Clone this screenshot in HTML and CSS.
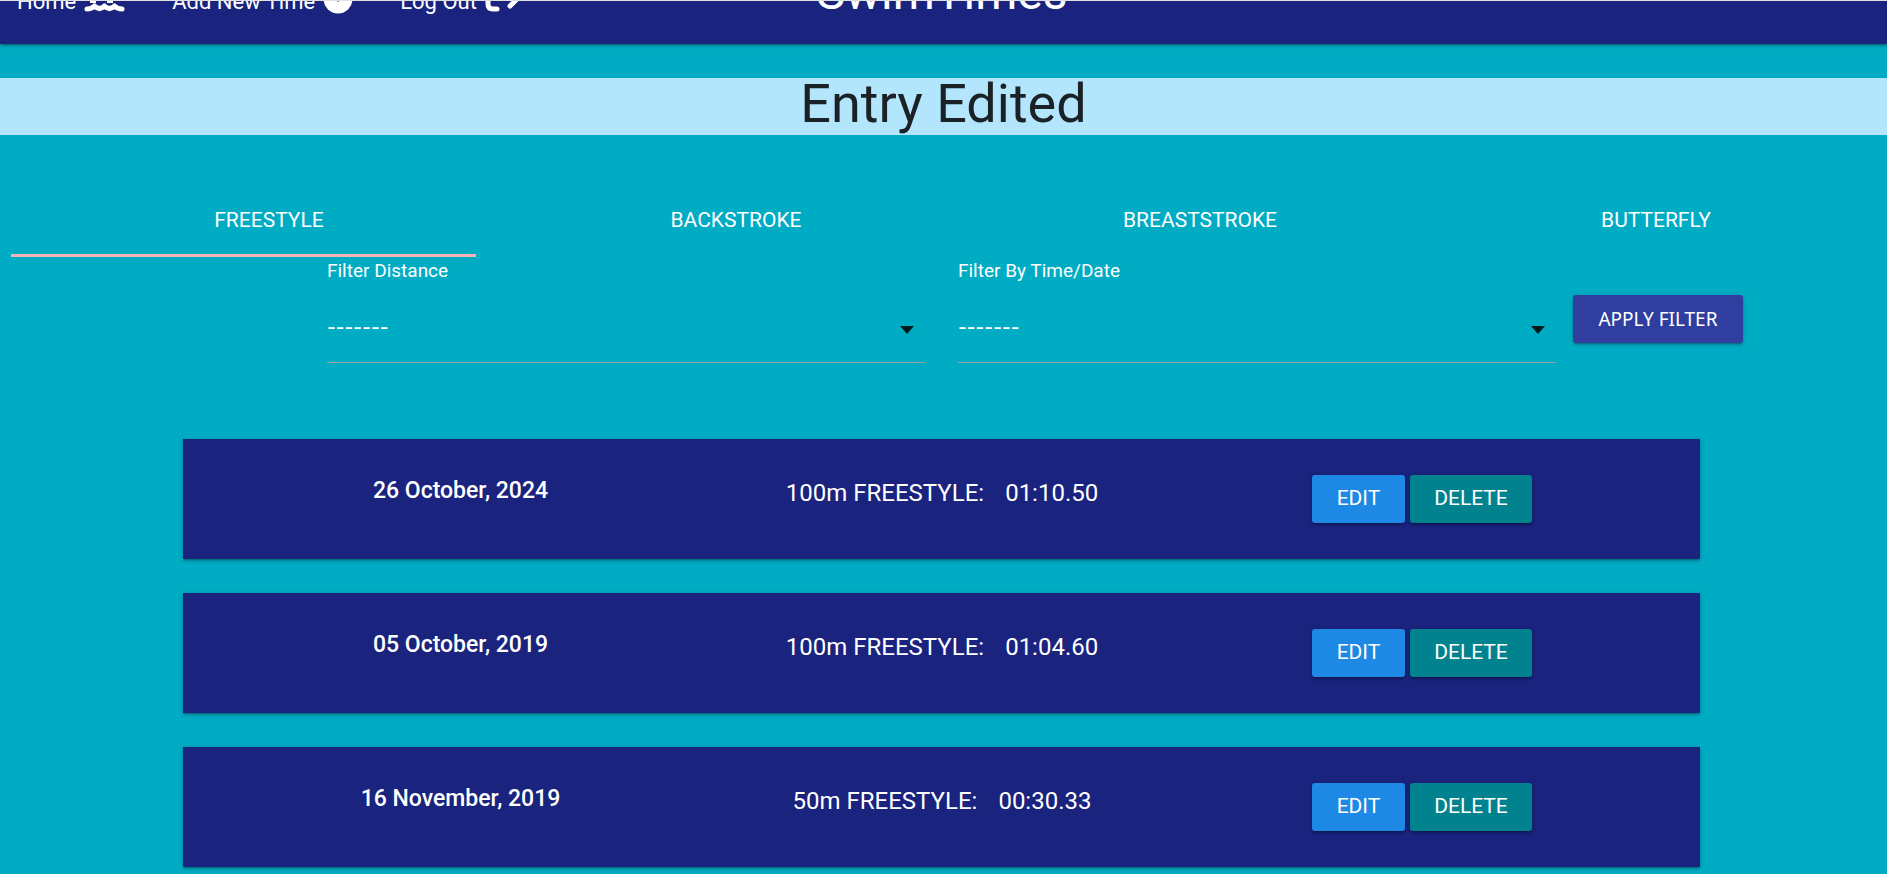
FILE: index.html
```html
<!DOCTYPE html>
<html lang="en">
<head>
<meta charset="utf-8">
<title>SwimTimes</title>
<link rel="stylesheet" href="styles.css">
</head>
<body>
<header class="navbar">
  <nav class="nav-links">
    <a class="nav-link" href="#">Home
      <svg class="icon icon-swim" viewBox="0 0 41 34" aria-hidden="true"><g fill="none" stroke="#fff" stroke-width="6" stroke-linejoin="round"><path d="M9 25V7q0-4 4-4M26 25V7q0-4 4-4M9 12h17"/><path d="M3 31q4.500 0 7.500-3q5 5 10 0q5 5 10 0q3 3 7.500 3" stroke-width="5" stroke-linecap="round"/></g></svg></a>
    <a class="nav-link" href="#">Add New Time
      <svg class="icon icon-add" viewBox="0 0 30 30" aria-hidden="true"><circle cx="15" cy="15" r="14.500" fill="#fff"/><path d="M15 7v10.500M9 12h12" stroke="#1a237e" stroke-width="2"/></svg></a>
    <a class="nav-link" href="#">Log Out
      <svg class="icon icon-out" viewBox="0 0 36 26" aria-hidden="true"><g fill="none" stroke="#fff" stroke-width="5" stroke-linecap="round" stroke-linejoin="round"><path d="M12 3H8q-5 0-5 5v10q0 5 5 5h4M12 12h21M25 4l8 8l-8 8"/></g></svg></a>
  </nav>
  <a class="brand" href="#">SwimTimes</a>
</header>
<main>
  <h1 class="flash">Entry Edited</h1>
  <nav class="tabs">
    <a class="tab active" href="#">FREESTYLE</a>
    <a class="tab" href="#">BACKSTROKE</a>
    <a class="tab" href="#">BREASTSTROKE</a>
    <a class="tab" href="#">BUTTERFLY</a>
  </nav>
  <div class="tab-indicator"></div>
  <form class="filters">
    <div class="fields">
      <div class="field">
        <label for="distance">Filter Distance</label>
        <div class="select-wrap">
          <select id="distance"><option>-------</option></select>
          <svg class="caret" viewBox="0 0 14 8" aria-hidden="true"><path d="M0 0h14L7 8z"/></svg>
        </div>
      </div>
      <div class="field">
        <label for="order">Filter By Time/Date</label>
        <div class="select-wrap">
          <select id="order"><option>-------</option></select>
          <svg class="caret" viewBox="0 0 14 8" aria-hidden="true"><path d="M0 0h14L7 8z"/></svg>
        </div>
      </div>
    </div>
    <button class="btn btn-apply" type="button">APPLY FILTER</button>
  </form>
  <section class="cards">
    <article class="card">
      <div class="date">26 October, 2024</div>
      <div class="result"><span>100m FREESTYLE:</span><span>01:10.50</span></div>
      <div class="actions"><button class="btn btn-edit" type="button">EDIT</button><button class="btn btn-delete" type="button">DELETE</button></div>
    </article>
    <article class="card">
      <div class="date">05 October, 2019</div>
      <div class="result"><span>100m FREESTYLE:</span><span>01:04.60</span></div>
      <div class="actions"><button class="btn btn-edit" type="button">EDIT</button><button class="btn btn-delete" type="button">DELETE</button></div>
    </article>
    <article class="card">
      <div class="date">16 November, 2019</div>
      <div class="result"><span>50m FREESTYLE:</span><span>00:30.33</span></div>
      <div class="actions"><button class="btn btn-edit" type="button">EDIT</button><button class="btn btn-delete" type="button">DELETE</button></div>
    </article>
  </section>
</main>
</body>
</html>
```
FILE: styles.css
```css
* {
  box-sizing: border-box;
}

body {
  margin: 0;
  background: #00acc4;
  color: #fff;
  font-family: Roboto, "Liberation Sans", sans-serif;
  overflow-x: hidden;
}

a {
  color: inherit;
  text-decoration: none;
}

.navbar {
  display: grid;
  grid-template-columns: 1fr auto 1fr;
  grid-template-rows: 16px;
  align-items: end;
  padding: 0 20px 27px 17px;
  border-top: 1px solid #e0e0e0;
  background: #1a237e;
  overflow: hidden;
  box-shadow: 0 2px 2px rgba(0, 0, 0, .14), 0 3px 1px -2px rgba(0, 0, 0, .12), 0 1px 5px rgba(0, 0, 0, .2);
}

.nav-links {
  display: flex;
  gap: 47px;
  margin-bottom: 2px;
}

.nav-link {
  display: flex;
  align-items: end;
  gap: 8px;
  font-size: 22px;
  line-height: 26px;
  white-space: nowrap;
}

.icon {
  display: block;
  flex: none;
}

.icon-swim {
  width: 41px;
  height: 34px;
  margin-bottom: 3px;
}

.icon-add {
  width: 30px;
  height: 30px;
  margin-bottom: 1px;
}

.icon-out {
  width: 36px;
  height: 26px;
  margin-bottom: 3px;
}

.brand {
  font-size: 48px;
  line-height: 48px;
}

.flash {
  margin: 34px 0 0;
  padding-bottom: 5px;
  background: #b3e5fc;
  color: #1a2226;
  font-size: 54px;
  font-weight: 400;
  line-height: 52px;
  text-align: center;
}

.tabs {
  display: grid;
  grid-template-columns: 466fr 468fr 460fr 452fr;
  padding: 52px 5px 0 36px;
}

.tab {
  font-size: 21px;
  line-height: 67px;
  text-align: center;
}

.tab-indicator {
  width: calc(25% - 7px);
  height: 3px;
  margin-left: 11px;
  background: #f6b2b5;
}

.filters {
  display: grid;
  grid-template-columns: 1fr 170px;
  column-gap: 17px;
  align-items: start;
  padding: 2px 144px 0 327px;
}

.fields {
  display: grid;
  grid-template-columns: 1fr 1fr;
  column-gap: 33px;
}

.field label {
  display: block;
  font-size: 19px;
  line-height: 24px;
}

.select-wrap {
  position: relative;
  margin-top: 12px;
}

.select-wrap select {
  display: block;
  width: 100%;
  height: 68px;
  padding: 0 0 2px;
  border: 0;
  border-bottom: 1px solid #9e9e9e;
  background: transparent;
  color: #fff;
  font-family: Inter, sans-serif;
  font-size: 19px;
  font-weight: 500;
  appearance: none;
}

.caret {
  position: absolute;
  top: 31px;
  right: 11px;
  width: 14px;
  height: 8px;
  fill: #00191c;
  pointer-events: none;
}

.btn {
  height: 48px;
  padding: 0 0 3px;
  border: 0;
  border-radius: 3px;
  color: #fff;
  font-family: Roboto, sans-serif;
  font-size: 21px;
  white-space: nowrap;
  box-shadow: 0 2px 2px rgba(0, 0, 0, .14), 0 3px 1px -2px rgba(0, 0, 0, .12), 0 1px 5px rgba(0, 0, 0, .2);
}

.btn-apply {
  margin-top: 36px;
  padding: 0;
  background: #303f9f;
  font-family: "Noto Sans", sans-serif;
  font-size: 19px;
}

.btn-edit {
  width: 93px;
  background: #1e88e5;
}

.btn-delete {
  width: 122px;
  background: #00838f;
}

.cards {
  display: grid;
  gap: 34px;
  padding: 76px 187px 34px 183px;
}

.card {
  display: grid;
  grid-template-columns: 555fr 408fr 552fr;
  align-items: start;
  padding: 36px 2px 36px 0;
  background: #1a237e;
  box-shadow: 0 2px 2px rgba(0, 0, 0, .14), 0 3px 1px -2px rgba(0, 0, 0, .12), 0 1px 5px rgba(0, 0, 0, .2);
}

.date {
  font-size: 23px;
  font-weight: 500;
  line-height: 32px;
  text-align: center;
}

.result {
  display: flex;
  justify-content: center;
  gap: 21px;
  font-size: 24px;
  line-height: 36px;
}

.actions {
  display: flex;
  justify-content: center;
  gap: 5px;
}
```
